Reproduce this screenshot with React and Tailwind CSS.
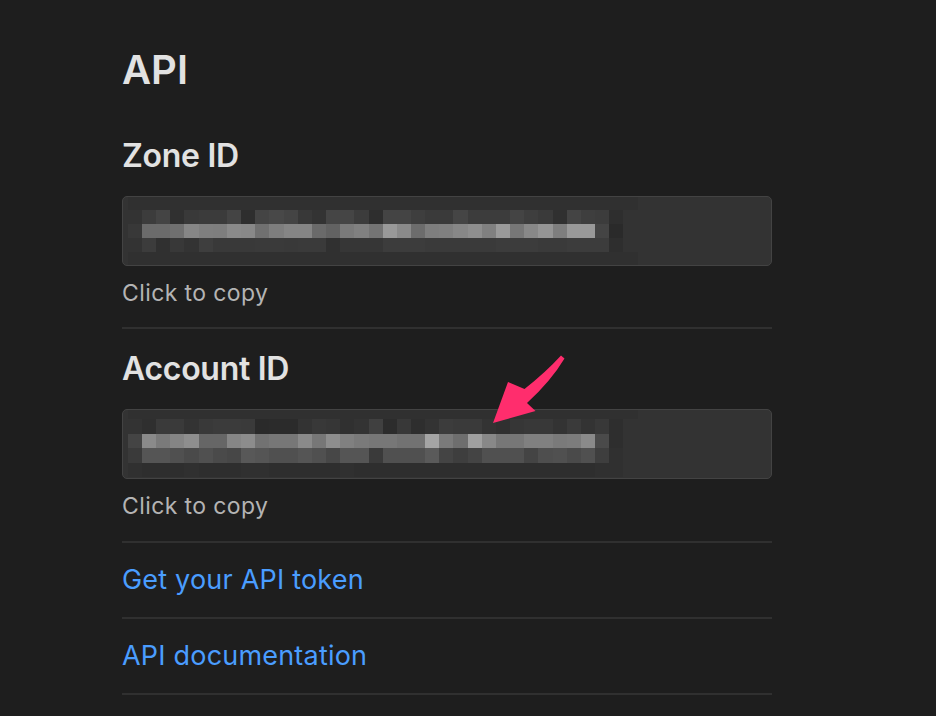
import React from "react";

const ZONE = {
  rows: [
    { y: -1, h: 14, v: Array(36).fill("30") },
    { y: 13, h: 14, v: ["33","3c","44","30","39","3b","3b","44","2e","44","48","44","38","33","45","45","3c","2e","44","44","3e","3a","3a","45","3c","3c","3c","44","3e","3a","30","44","3e","3c","2e","33"] },
    { y: 27, h: 14, v: ["38","6b","6b","70","86","7f","7e","8a","88","70","7e","85","85","6a","62","7a","80","74","99","8a","6c","7e","80","87","8e","80","9a","77","88","95","7e","99","99","44","2a","33"] },
    { y: 41, h: 14, v: ["33","3c","30","38","33","3e","39","39","39","3a","3a","39","3a","3a","30","36","36","36","3c","3c","3c","3a","3a","3a","3a","3a","3c","3c","3c","3a","3a","3c","3c","3c","2e","33"] },
    { y: 55, h: 14, v: Array(36).fill("30") },
  ],
};

const ACCOUNT = {
  rows: [
    { y: -5, h: 14.4, v: Array(36).fill("30") },
    { y: 9.3, h: 14.4, v: ["33","2f","3a","3a","33","39","3b","3b","3a","2a","2b","2b","33","38","36","30","33","40","2c","38","2e","33","3c","3a","3a","33","30","36","38","38","33","3a","33","38","2e","33"] },
    { y: 23.7, h: 14.4, v: ["44","8a","7a","85","8e","66","66","86","8c","72","77","77","8a","77","8e","80","7a","77","77","72","72","a4","7a","6e","a0","88","77","77","80","80","7a","7c","8a","4a","2e","33"] },
    { y: 38, h: 14.4, v: ["3a","55","55","50","4a","50","4a","47","58","55","50","50","55","50","47","55","55","3a","50","50","50","5a","44","3e","44","50","50","50","44","4e","50","4a","50","3e","30","33"] },
    { y: 52.5, h: 14.4, v: ["30","2e","2e","2e","30","2e","2e","2e","30","30","2e","2e","2e","2e","2e","30","2e","2e","2e","2e","2e","2e","2e","2e","2e","2e","2e","2e","2e","2e","2e","2e","2e","30","30","33"] },
  ],
};

function Pixelated({ data }) {
  const cw = 14.16;
  const x0 = 4.8;
  return (
    <svg width="648" height="68" className="block" shapeRendering="crispEdges">
      {data.rows.map((r, ri) =>
        r.v.map((c, ci) => (
          <rect
            key={ri + "-" + ci}
            x={x0 + ci * cw}
            y={r.y}
            width={cw + 0.5}
            height={r.h + 0.5}
            fill={"#" + c + c + c}
          />
        ))
      )}
    </svg>
  );
}

function IdBlock({ title, data }) {
  return (
    <div>
      <div className="text-[32px] leading-[40px] font-semibold tracking-[-0.3px] text-[#e2e2e2]">{title}</div>
      <div className="mt-[20px] h-[70px] rounded-[5px] border border-[#434343] bg-[#333333] overflow-hidden">
        <Pixelated data={data} />
      </div>
      <div className="mt-[13px] text-[23px] leading-[28px] tracking-[0.4px] text-[#b4b4b4]">Click to copy</div>
    </div>
  );
}

function Divider() {
  return <div className="h-[2px] bg-[#303030]" />;
}

export default function App() {
  return (
    <div
      className="relative w-[936px] h-[716px] overflow-hidden bg-[#1e1e1e]"
      style={{ fontFamily: "Inter, 'Noto Sans', sans-serif" }}
    >
      <div className="ml-[122px] w-[650px] pt-[46px] flex flex-col">
        <div className="text-[40px] leading-[48px] font-semibold text-[#e2e2e2]">API</div>
        <div className="mt-[42px]">
          <IdBlock title="Zone ID" data={ZONE} />
        </div>
        <div className="mt-[20px]">
          <Divider />
        </div>
        <div className="mt-[20px]">
          <IdBlock title="Account ID" data={ACCOUNT} />
        </div>
        <div className="mt-[21px]">
          <Divider />
        </div>
        <div className="h-[74px] flex items-center text-[27px] leading-[32px] tracking-[0.2px] text-[#4a9dff]">
          Get your API token
        </div>
        <Divider />
        <div className="h-[74px] flex items-center text-[27px] leading-[32px] tracking-[0.2px] text-[#4a9dff]">
          API documentation
        </div>
        <Divider />
      </div>

      <svg
        className="absolute left-0 top-0 pointer-events-none"
        width="936"
        height="716"
      >
        <path
          d="M 561 355.5 Q 546 372 524.5 389 L 508 382 L 493 423 L 535.5 411 L 527 403 Q 551 381 564.5 358.5 Z"
          fill="#ff2d6d"
        />
      </svg>
    </div>
  );
}
